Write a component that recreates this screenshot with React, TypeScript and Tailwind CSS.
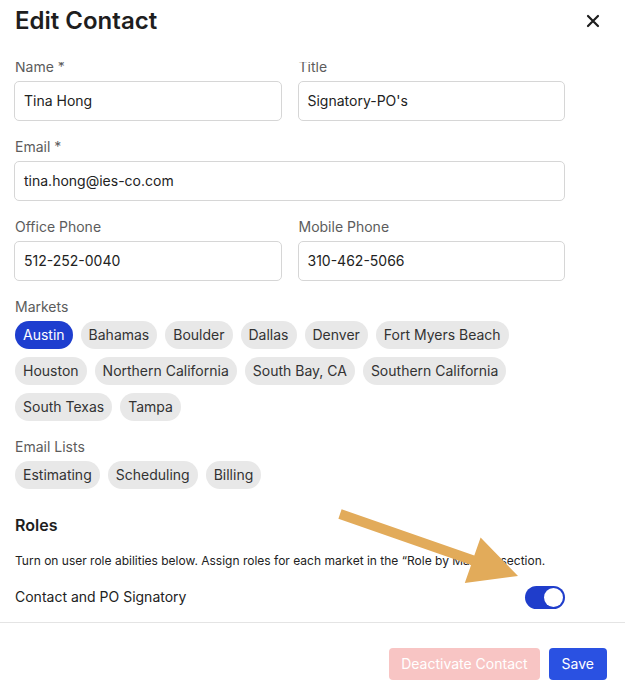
import React from "react";

const markets = [
  "Austin",
  "Bahamas",
  "Boulder",
  "Dallas",
  "Denver",
  "Fort Myers Beach",
  "Houston",
  "Northern California",
  "South Bay, CA",
  "Southern California",
  "South Texas",
  "Tampa",
];
const lists = ["Estimating", "Scheduling", "Billing"];

function Field({ label, value }: { label: string; value: string }) {
  return (
    <div className="flex flex-col">
      <label className="text-sm leading-5 text-[#5c5c5c] pl-px mb-1">{label}</label>
      <div className="h-10 rounded-[5px] border border-[#d6d6d6] flex items-center px-[9px] text-sm text-[#222]">
        {value}
      </div>
    </div>
  );
}

function Chip({ text, active }: { text: string; active?: boolean }) {
  return (
    <span
      className={
        active
          ? "h-7 px-2 rounded-full flex items-center text-sm bg-[#1e3ecf] text-white"
          : "h-7 px-2 rounded-full flex items-center text-sm bg-[#e8e8e8] text-[#333]"
      }
    >
      {text}
    </span>
  );
}

export default function App() {
  return (
    <div
      className="relative w-[625px] h-[695px] bg-white overflow-hidden flex flex-col"
      style={{ fontFamily: "Inter, 'Noto Sans', sans-serif" }}
    >
      <div className="h-[62px] shrink-0 flex items-start justify-between pl-[15px] pr-[25px] pt-[5px]">
        <h1 className="text-2xl leading-8 font-semibold text-[#1e1e1e]">Edit Contact</h1>
        <svg width="14" height="14" viewBox="0 0 14 14" className="mt-[9px]">
          <path d="M2 2L12 12M12 2L2 12" stroke="#1e1e1e" strokeWidth="2.2" strokeLinecap="round" />
        </svg>
      </div>
      <div className="flex-1 overflow-hidden">
        <div className="-mt-[5px] ml-[14px] w-[551px] flex flex-col">
          <div className="grid grid-cols-2 gap-x-4">
            <Field label="Name *" value="Tina Hong" />
            <Field label="Title" value="Signatory-PO's" />
          </div>
          <div className="mt-4">
            <Field label="Email *" value="tina.hong@ies-co.com" />
          </div>
          <div className="grid grid-cols-2 gap-x-4 mt-4">
            <Field label="Office Phone" value="512-252-0040" />
            <Field label="Mobile Phone" value="310-462-5066" />
          </div>
          <div className="mt-4 flex flex-col">
            <span className="text-sm leading-5 text-[#5c5c5c] pl-px mb-1">Markets</span>
            <div className="flex flex-wrap gap-2 pl-px w-[500px]">
              {markets.map((m, i) => (
                <Chip key={m} text={m} active={i === 0} />
              ))}
            </div>
          </div>
          <div className="mt-4 flex flex-col">
            <span className="text-sm leading-5 text-[#5c5c5c] pl-px mb-1">Email Lists</span>
            <div className="flex flex-wrap gap-2 pl-px">
              {lists.map((m) => (
                <Chip key={m} text={m} />
              ))}
            </div>
          </div>
          <h2 className="mt-6 text-base leading-6 font-semibold text-[#1e1e1e] pl-px">Roles</h2>
          <p className="mt-4 text-xs leading-4 text-[#222] pl-px">
            Turn on user role abilities below. Assign roles for each market in the “Role by Market” section.
          </p>
          <div className="mt-4 flex items-center justify-between pl-px h-6">
            <span className="text-sm text-[#222]">Contact and PO Signatory</span>
            <div className="w-10 h-[23px] rounded-full bg-[#1f3dcb] flex items-center justify-end pr-[2px]">
              <div className="w-[19px] h-[19px] rounded-full bg-white" />
            </div>
          </div>
        </div>
      </div>
      <div className="h-[73px] shrink-0 border-t border-[#e4e4e4] flex justify-end items-start pt-[25px] pr-[18px] gap-[9px]">
        <button className="h-8 px-[12px] rounded-[4px] bg-[#f8c5c4] text-white text-sm">Deactivate Contact</button>
        <button className="h-8 px-[13px] rounded-[4px] bg-[#2a51e2] text-white text-sm">Save</button>
      </div>
      <svg className="absolute inset-0 pointer-events-none" width="625" height="695">
        <polygon
          points="341.6,509.3 474.3,555.5 480.6,537.5 518,576 464.8,582.9 471.1,564.9 338.4,518.7"
          fill="#e2ab5a"
          strokeLinejoin="round"
        />
      </svg>
    </div>
  );
}
